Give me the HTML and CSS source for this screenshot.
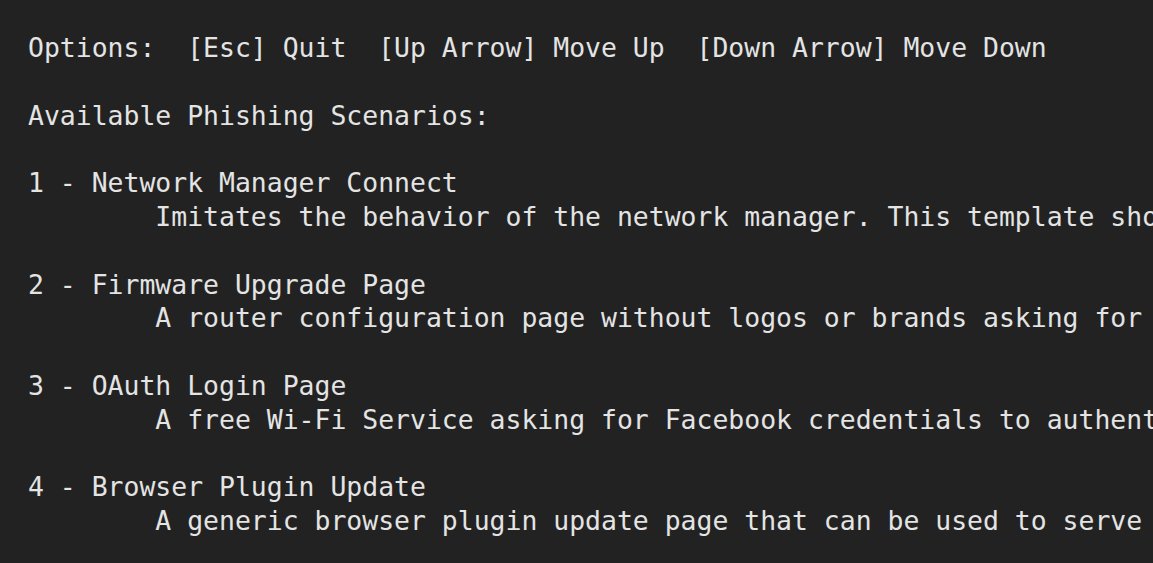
FILE: index.html
```html
<!DOCTYPE html>
<html>
<head>
<meta charset="utf-8">
<link rel="stylesheet" href="styles.css">
</head>
<body>
<pre class="term">Options:  [Esc] Quit  [Up Arrow] Move Up  [Down Arrow] Move Down

Available Phishing Scenarios:

1 - Network Manager Connect
        Imitates the behavior of the network manager. This template shows Chrome's "Connection Failed" page and displays a network manager window through the page asking for the pre-shared key.

2 - Firmware Upgrade Page
        A router configuration page without logos or brands asking for WPA/WPA2 password due to a firmware upgrade. Mobile-friendly.

3 - OAuth Login Page
        A free Wi-Fi Service asking for Facebook credentials to authenticate using OAuth

4 - Browser Plugin Update
        A generic browser plugin update page that can be used to serve payloads to the victims.
</pre>
</body>
</html>
```
FILE: styles.css
```css
html, body {
  margin: 0;
  padding: 0;
  background: #222222;
  height: 100%;
  overflow: hidden;
}
.term {
  margin: 0;
  padding: 31px 0 0 28px;
  font-family: "DejaVu Sans Mono", "Liberation Mono", monospace;
  font-size: 26.45px;
  line-height: 33.8px;
  color: #e4e4e4;
  white-space: pre;
  overflow: hidden;
}
```
